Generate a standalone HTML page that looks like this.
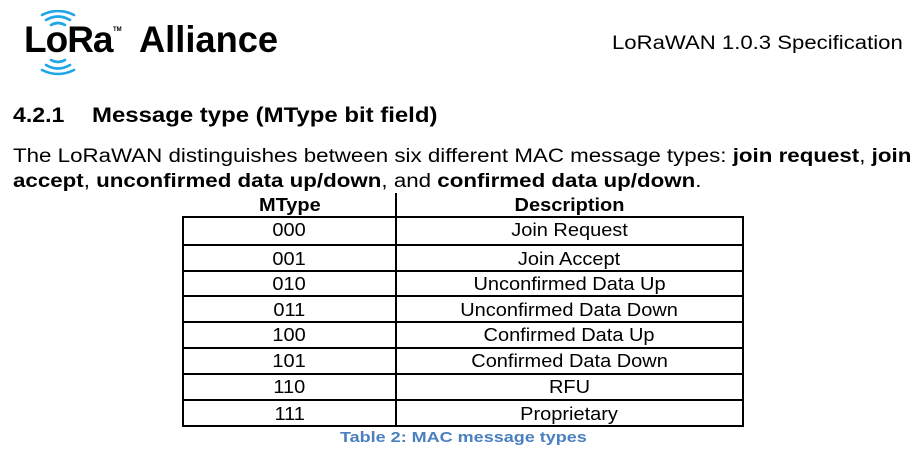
<!DOCTYPE html>
<html><head><style>
body{margin:0;width:924px;height:456px;background:#fff;position:relative;overflow:hidden;font-family:"Liberation Sans",Arial,sans-serif;color:#000}
.a{position:absolute;white-space:nowrap;transform-origin:0 0}
.h{position:absolute;left:183px;width:560px;height:2px;background:#000}
.v{position:absolute;width:2px;background:#000}
.c{position:absolute;text-align:center;font-size:18px;line-height:20px}
.c span{display:inline-block;transform:scaleX(1.11)}
</style></head><body>
<div class="a" style="left:24px;top:19px;font-size:37px;font-weight:bold;letter-spacing:-1px">LoRa</div>
<div class="a" style="left:113px;top:27px;font-size:6px;font-weight:bold">TM</div>
<div class="a" style="left:139px;top:19px;font-size:37px;font-weight:bold;transform:scaleX(0.98)">Alliance</div>
<svg class="a" style="left:35px;top:10px" width="46" height="66" viewBox="0 0 46 66" fill="none" stroke="#1ea6e6" stroke-width="2.6" stroke-linecap="round">
<path d="M16 15 Q23 11 30 15"/><path d="M11 10 Q23 3 35 10"/><path d="M7 5 Q23 -3 39 5"/>
<path d="M16 50 Q23 54 30 50"/><path d="M11 55 Q23 62 35 55"/><path d="M7 60 Q23 68 39 60"/>
</svg>
<div class="a" style="left:612px;top:33px;font-size:19px;transform:scaleX(1.165)">LoRaWAN 1.0.3 Specification</div>
<div class="a" style="left:13px;top:104px;font-size:21px;font-weight:bold;transform:scaleX(1.1)">4.2.1</div>
<div class="a" style="left:92px;top:104px;font-size:21px;font-weight:bold;transform:scaleX(1.14)">Message type (MType bit field)</div>
<div class="a" style="left:13px;top:144px;font-size:19px;line-height:25px;transform:scaleX(1.175)">The LoRaWAN distinguishes between six different MAC message types: <b>join request</b>, <b>join</b><br><b>accept</b>, <b>unconfirmed data up/down</b>, and <b>confirmed data up/down</b>.</div>
<div class="c" style="left:183px;width:213px;top:195px;font-weight:bold"><span>MType</span></div>
<div class="c" style="left:396px;width:347px;top:195px;font-weight:bold"><span>Description</span></div>
<div class="v" style="left:395px;top:193px;height:234px"></div>
<div class="v" style="left:182px;top:216px;height:211px"></div>
<div class="v" style="left:742px;top:216px;height:211px"></div>
<div class="h" style="top:216px"></div><div class="h" style="top:244px"></div><div class="h" style="top:270px"></div><div class="h" style="top:295px"></div><div class="h" style="top:321px"></div><div class="h" style="top:347px"></div><div class="h" style="top:373px"></div><div class="h" style="top:399px"></div><div class="h" style="top:425px;width:562px;left:182px"></div>
<div class="c" style="left:183px;width:213px;top:220px"><span>000</span></div><div class="c" style="left:396px;width:347px;top:220px"><span>Join Request</span></div>
<div class="c" style="left:183px;width:213px;top:249px"><span>001</span></div><div class="c" style="left:396px;width:347px;top:249px"><span>Join Accept</span></div>
<div class="c" style="left:183px;width:213px;top:274px"><span>010</span></div><div class="c" style="left:396px;width:347px;top:274px"><span>Unconfirmed Data Up</span></div>
<div class="c" style="left:183px;width:213px;top:300px"><span>011</span></div><div class="c" style="left:396px;width:347px;top:300px"><span>Unconfirmed Data Down</span></div>
<div class="c" style="left:183px;width:213px;top:325px"><span>100</span></div><div class="c" style="left:396px;width:347px;top:325px"><span>Confirmed Data Up</span></div>
<div class="c" style="left:183px;width:213px;top:351px"><span>101</span></div><div class="c" style="left:396px;width:347px;top:351px"><span>Confirmed Data Down</span></div>
<div class="c" style="left:183px;width:213px;top:377px"><span>110</span></div><div class="c" style="left:396px;width:347px;top:377px"><span>RFU</span></div>
<div class="c" style="left:183px;width:213px;top:404px"><span>111</span></div><div class="c" style="left:396px;width:347px;top:404px"><span>Proprietary</span></div>
<div class="a" style="left:340px;top:429px;font-size:15px;font-weight:bold;color:#4a7fc0;transform:scaleX(1.2)">Table 2: MAC message types</div>
</body></html>
